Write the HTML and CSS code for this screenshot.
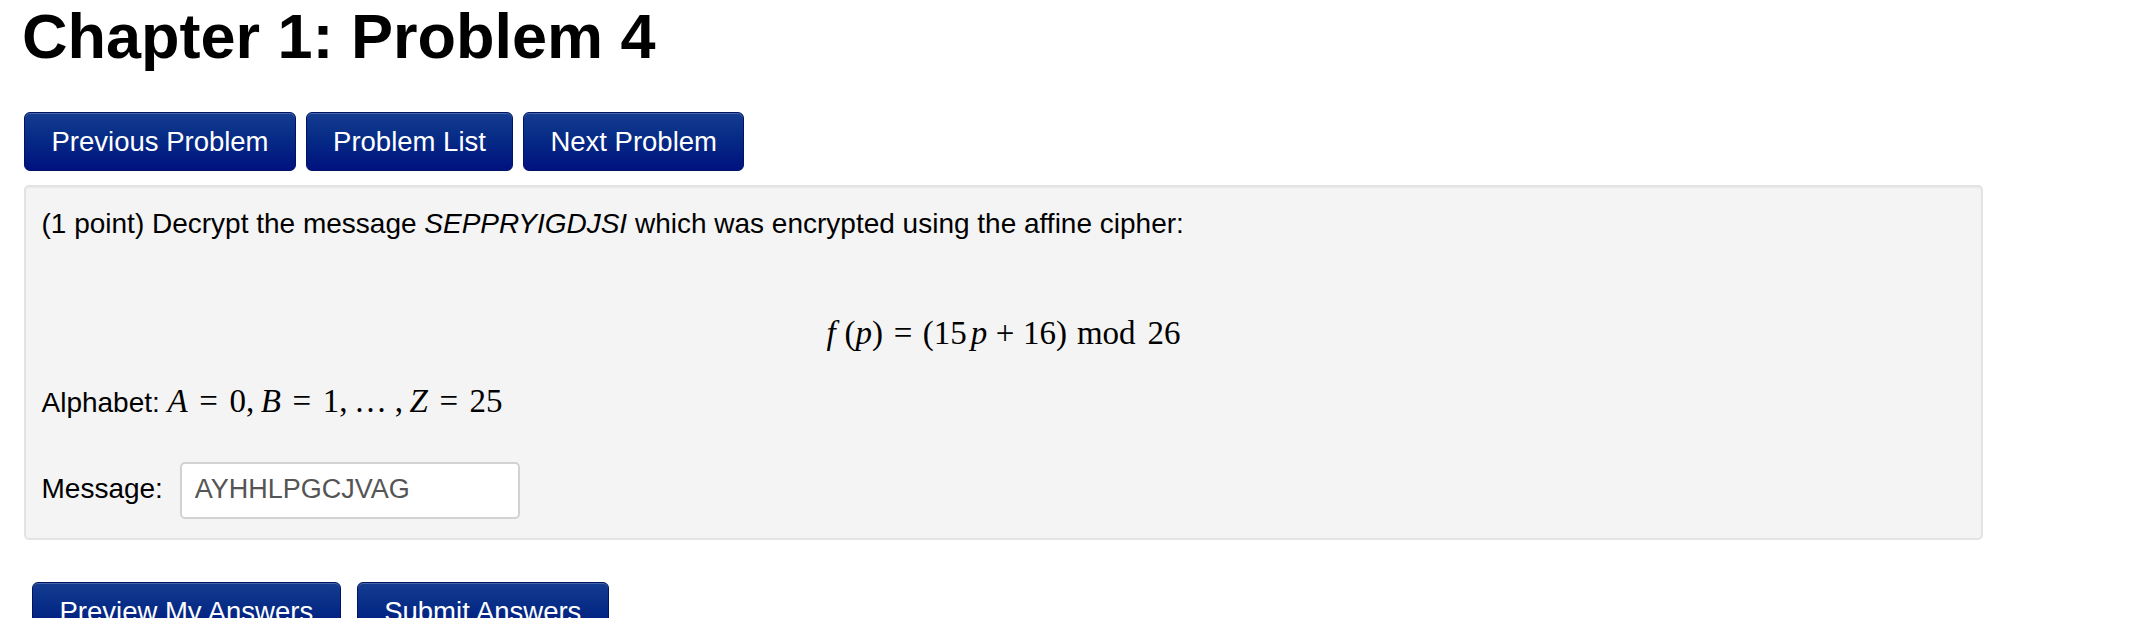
FILE: index.html
```html
<!DOCTYPE html>
<html lang="en">
<head>
<meta charset="utf-8">
<title>Chapter 1: Problem 4</title>
<link rel="stylesheet" href="styles.css">
</head>
<body>
<div class="page">
  <h1 class="title">Chapter 1: Problem 4</h1>

  <nav class="nav-row">
    <a class="btn" href="#">Previous Problem</a>
    <a class="btn" href="#">Problem List</a>
    <a class="btn" href="#">Next Problem</a>
  </nav>

  <div class="problem">
    <p class="line">(1 point) Decrypt the message <i>SEPPRYIGDJSI</i> which was encrypted using the affine cipher:</p>

    <div class="display-math">
      <span class="math"><span class="mi f">f</span><span class="mo">(</span><span class="mi">p</span><span class="mo">)</span><span class="mo rel">=</span><span class="mo">(</span><span class="mn">15</span><span class="mi pv">p</span><span class="mo bin">+</span><span class="mn">16</span><span class="mo">)</span><span class="mo op">mod</span><span class="mn">26</span></span>
    </div>

    <p class="line">Alphabet: <span class="math"><span class="mi">A</span><span class="mo rel">=</span><span class="mn">0</span><span class="mo punct">,</span><span class="mi">B</span><span class="mo rel">=</span><span class="mn">1</span><span class="mo punct">,</span><span class="mo dots">…</span><span class="mo punct">,</span><span class="mi">Z</span><span class="mo rel">=</span><span class="mn">25</span></span></p>

    <p class="line msg">Message: <input class="answer" type="text" value="AYHHLPGCJVAG"></p>
  </div>

  <div class="submit-row">
    <a class="btn" href="#">Preview My Answers</a>
    <a class="btn" href="#">Submit Answers</a>
  </div>
</div>
</body>
</html>
```

FILE: styles.css
```css
html, body {
  margin: 0;
  padding: 0;
  background: #ffffff;
}

body {
  font-family: "Liberation Sans", Arial, Helvetica, sans-serif;
  color: #000000;
}

.page {
  width: 1959px;
  padding-left: 24px;
}

.title {
  margin: 0 0 0 -2px;
  font-size: 63px;
  line-height: 72px;
  font-weight: 700;
  color: #000000;
}

.nav-row {
  display: flex;
  gap: 9.5px;
  margin-top: 40px;
}

.btn {
  display: inline-block;
  box-sizing: border-box;
  height: 59px;
  padding: 12px 26.5px;
  border: 1px solid #001466;
  border-radius: 6px;
  background: linear-gradient(to bottom, #143c90 0%, #062b86 45%, #00117f 100%);
  box-shadow: inset 0 1px 0 rgba(255, 255, 255, 0.22);
  color: #ffffff;
  font-family: "Liberation Sans", Arial, Helvetica, sans-serif;
  font-size: 27.5px;
  line-height: 33px;
  text-decoration: none;
  white-space: nowrap;
}

.problem {
  box-sizing: border-box;
  margin-top: 14px;
  height: 355px;
  padding: 17px 15.5px 19px;
  background: #f4f4f4;
  border: 2px solid #e3e3e3;
  border-radius: 5px;
  box-shadow: inset 0 1px 1px rgba(0, 0, 0, 0.05);
}

.line {
  margin: 0;
  font-size: 28px;
  line-height: 40px;
  white-space: nowrap;
}

.display-math {
  margin-top: 69px;
  text-align: center;
  font-family: "Liberation Serif", "Times New Roman", serif;
  font-size: 33px;
  line-height: 40px;
}

.display-math + .line {
  margin-top: 29.5px;
}

.line.msg {
  margin-top: 39.5px;
}

.math {
  font-family: "Liberation Serif", "Times New Roman", serif;
  font-size: 33px;
  line-height: 1;
  white-space: nowrap;
}

.mi {
  font-style: italic;
}

.mi.f {
  margin-right: 0.27em;
}

.mi.pv {
  margin-left: 0.12em;
}

.rel {
  margin: 0 0.35em;
}

.display-math .rel {
  margin: 0 0.32em;
}

.bin {
  margin: 0 0.26em;
}

.op {
  margin: 0 0.36em 0 0.3em;
}

.punct {
  margin-right: 0.2em;
}

.dots {
  margin-right: 0.2em;
  letter-spacing: 0.03em;
}

.answer {
  box-sizing: border-box;
  width: 340px;
  height: 57px;
  margin: 0 0 0 9px;
  padding: 0 13px 3px;
  border: 2px solid #d2d2d2;
  border-radius: 5px;
  background: #ffffff;
  color: #555555;
  font-family: "Liberation Sans", Arial, Helvetica, sans-serif;
  font-size: 27px;
  vertical-align: baseline;
  outline: none;
}

.submit-row {
  display: flex;
  gap: 16px;
  margin-top: 41.5px;
  padding-left: 8px;
}
```
